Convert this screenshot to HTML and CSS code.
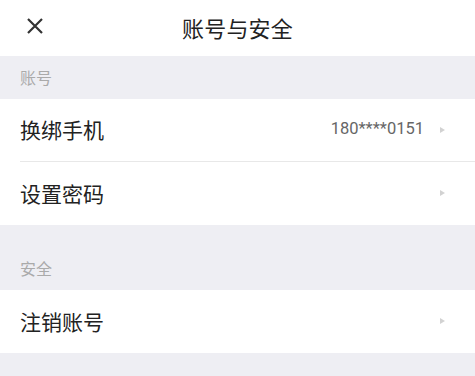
FILE: index.html
```html
<!DOCTYPE html>
<html lang="zh-CN">
<head>
    <meta charset="UTF-8">
    <meta name="viewport" content="width=device-width, initial-scale=1.0">
    <title>账号与安全</title>
    <link rel="stylesheet" href="styles.css">
</head>
<body>
    <div class="header">
        <span class="close">
            <svg width="18" height="18" viewBox="0 0 18 18">
                <path d="M2 2 L16 16 M16 2 L2 16" stroke="#333" stroke-width="2.2" stroke-linecap="butt" fill="none"/>
            </svg>
        </span>
        <div class="title">账号与安全</div>
    </div>

    <div class="section-label">账号</div>
    <div class="group">
        <div class="row">
            <span class="row-name">换绑手机</span>
            <span class="row-value">180****0151</span>
            <span class="arrow"></span>
        </div>
        <div class="row">
            <span class="row-name">设置密码</span>
            <span class="arrow"></span>
        </div>
    </div>

    <div class="section-label tall">安全</div>
    <div class="group">
        <div class="row">
            <span class="row-name">注销账号</span>
            <span class="arrow"></span>
        </div>
    </div>
</body>
</html>
```

FILE: styles.css
```css
body {
    margin: 0;
    padding: 0;
    background-color: #eeeef3;
    font-family: "Noto Sans CJK SC", "Noto Sans", sans-serif;
    color: #222;
}
.header {
    height: 56px;
    background-color: #fff;
    display: flex;
    align-items: center;
    justify-content: center;
    position: relative;
}
.close {
    position: absolute;
    left: 26px;
    top: 17px;
    width: 18px;
    height: 18px;
}
.close svg {
    display: block;
}
.title {
    font-size: 22px;
    line-height: 1;
    color: #222;
    letter-spacing: 0.2px;
    padding-bottom: 2px;
}
.section-label {
    height: 43px;
    box-sizing: border-box;
    padding-left: 20px;
    padding-bottom: 2px;
    font-size: 16px;
    line-height: 1;
    color: #aaa;
    display: flex;
    align-items: center;
}
.section-label.tall {
    height: 65px;
    align-items: flex-end;
    padding-bottom: 14px;
}
.group {
    background-color: #fff;
    padding-left: 20px;
}
.row {
    height: 63px;
    box-sizing: border-box;
    display: flex;
    align-items: center;
    padding-right: 30px;
    padding-bottom: 1px;
    border-bottom: 1px solid #e8e8e8;
}
.row:last-child {
    border-bottom: none;
}
.row-name {
    font-size: 21px;
    line-height: 1;
    flex: 1;
}
.row-value {
    font-family: Roboto, "Noto Sans", sans-serif;
    font-size: 16.5px;
    line-height: 1;
    color: #666;
    margin-right: 16px;
}
.arrow {
    width: 0;
    height: 0;
    border-top: 3.5px solid transparent;
    border-bottom: 3.5px solid transparent;
    border-left: 5px solid #d2d2d2;
}
```
